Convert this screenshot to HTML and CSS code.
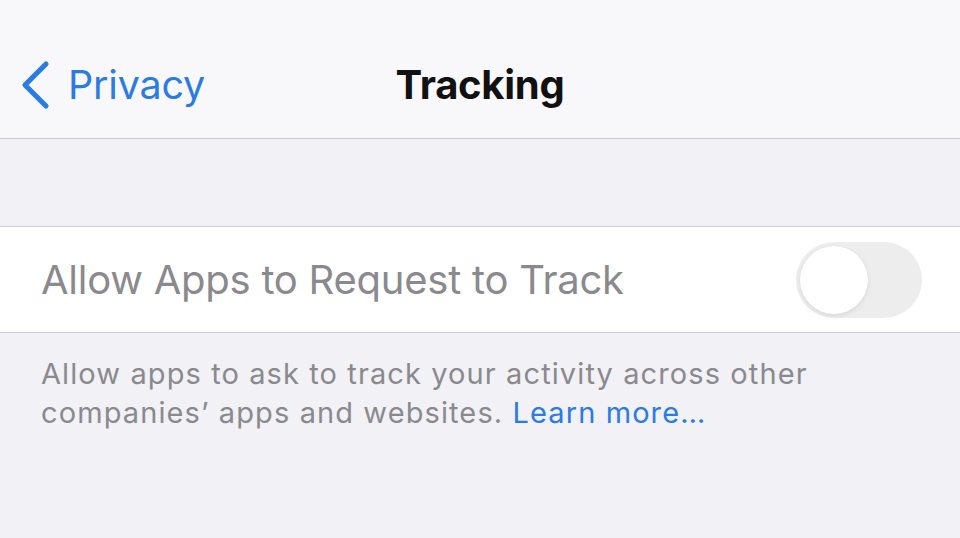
FILE: index.html
```html
<!DOCTYPE html>
<html>
<head>
<meta charset="utf-8">
<link rel="stylesheet" href="styles.css">
</head>
<body>
<div class="screen">
  <header class="nav">
    <div class="back">
      <svg class="chev" width="32" height="50" viewBox="0 0 32 50"><polyline points="27,4 6,25 27,46" fill="none" stroke="#2a7be4" stroke-width="5.2" stroke-linecap="round" stroke-linejoin="round"/></svg>
      <span class="back-label">Privacy</span>
    </div>
    <h1 class="title">Tracking</h1>
  </header>
  <div class="spacer"></div>
  <div class="row">
    <span class="row-label">Allow Apps to Request to Track</span>
    <div class="toggle"><div class="knob"></div></div>
  </div>
  <p class="footer">Allow apps to ask to track your activity across other companies’ apps and websites. <span class="link">Learn more…</span></p>
</div>
</body>
</html>
```
FILE: styles.css
```css
* { box-sizing: border-box; }
html, body { margin: 0; padding: 0; }
body { width: 960px; height: 538px; overflow: hidden; background: #f1f1f6; font-family: Inter, "Noto Sans", sans-serif; }
.screen { width: 960px; height: 538px; background: #f1f1f6; }
.nav { position: relative; height: 139px; background: #f8f8fa; border-bottom: 1px solid #c9c9cd; display: flex; justify-content: center; padding-top: 60px; }
.back { position: absolute; left: 19px; top: 60px; display: flex; align-items: center; }
.chev { display: block; }
.back-label { margin-left: 17px; font-size: 39.5px; color: #2a7be4; letter-spacing: -0.2px; }
.title { margin: 0; font-size: 40px; line-height: 50px; font-weight: 700; color: #111; letter-spacing: -0.3px; }
.spacer { height: 87px; }
.row { height: 107px; background: #fff; border-top: 1px solid #cfcfd3; border-bottom: 1px solid #cfcfd3; display: flex; align-items: center; justify-content: space-between; padding: 0 38px 0 41px; }
.row-label { font-size: 40px; color: #8a8a8e; letter-spacing: -0.25px; }
.toggle { width: 126px; height: 76px; border-radius: 38px; background: #ededee; position: relative; }
.knob { position: absolute; left: 4px; top: 4px; width: 68px; height: 68px; border-radius: 50%; background: #fff; box-shadow: 0 2px 5px rgba(0,0,0,0.08), 0 0 1px rgba(0,0,0,0.08); }
.footer { margin: 0; width: 880px; padding: 21px 0 0 41px; font-size: 29px; line-height: 39px; color: #8a8a8e; letter-spacing: 1.1px; }
.link { color: #2a7be4; }
```
